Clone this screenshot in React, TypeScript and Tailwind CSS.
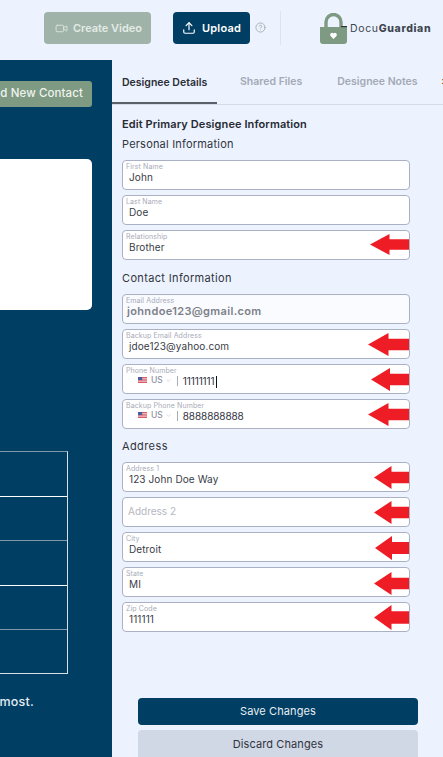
import { Video, Upload, CircleHelp, ChevronDown } from "lucide-react";

const font = { fontFamily: '"Inter", "Liberation Sans", sans-serif' };

function Arrow({ w, h, top }: { w: number; h: number; top: number }) {
  return (
    <svg
      className="absolute right-0 z-10"
      style={{ width: w, height: h, top }}
      viewBox="0 0 40 22"
      preserveAspectRatio="none"
    >
      <polygon points="0,11 20,0 20,5.5 40,5.5 40,16.5 20,16.5 20,22" fill="#ee1c25" />
    </svg>
  );
}

function Flag() {
  return (
    <svg width="9" height="6" viewBox="0 0 13 8" preserveAspectRatio="none" className="mt-[-3px] shrink-0">
      <rect width="13" height="8" fill="#f3d5d8" />
      <rect y="0" width="13" height="1.2" fill="#d9505e" />
      <rect y="2.3" width="13" height="1.2" fill="#d9505e" />
      <rect y="4.6" width="13" height="1.2" fill="#d9505e" />
      <rect y="6.8" width="13" height="1.2" fill="#d9505e" />
      <rect width="6" height="4.2" fill="#4a5c9a" />
    </svg>
  );
}

function Field({
  label,
  value,
  arrow,
  muted,
  strong,
  phone,
  cursor,
}: {
  label: string;
  value?: string;
  arrow?: [number, number, number];
  muted?: boolean;
  strong?: boolean;
  phone?: boolean;
  cursor?: boolean;
}) {
  return (
    <div
      className={`relative h-[30px] w-[288px] rounded-[4px] border border-[#abb1c4] pl-[3px] ${
        muted ? "bg-[#f9fbff]" : "bg-white"
      }`}
    >
      {value !== undefined ? (
        <>
          <div className="h-[9px] pt-[1px] text-[7px] leading-[9px] tracking-[0.1px] text-[#a8abb8]">{label}</div>
          {phone ? (
            <div className="flex h-[15px] items-center pl-[12px]">
              <Flag />
              <span className="ml-[4px] mt-[-3px] text-[8.5px] text-[#7d8291]">US</span>
              <ChevronDown className="ml-[2px] mt-[-3px] h-[7px] w-[7px] text-[#c4c7d0]" />
              <span className="ml-[5px] mt-[-1px] h-[10px] w-px bg-[#a9adb9]" />
              <span className="ml-[5px] text-[10px] tracking-[-0.1px] text-[#2f3340]">{value}</span>
              {cursor && <span className="ml-[1px] h-[12px] w-px bg-[#111]" />}
            </div>
          ) : (
            <div
              className={`leading-[14px] ${
                strong
                  ? "pl-[1px] text-[11px] font-semibold tracking-[0.35px] text-[#7d7f88]"
                  : "pl-[3px] text-[10px] tracking-[0.1px] text-[#3a3d47]"
              }`}
            >
              {value}
            </div>
          )}
        </>
      ) : (
        <div className="pl-[2px] pt-[7px] text-[10px] leading-[12px] text-[#b5b7bf]">{label}</div>
      )}
      {arrow && <Arrow w={arrow[0]} h={arrow[1]} top={arrow[2]} />}
    </div>
  );
}

export default function App() {
  return (
    <div className="flex h-[757px] w-[443px] flex-col overflow-hidden bg-[#edf3fe]" style={font}>
      <header className="flex h-[60px] shrink-0 items-start pl-[44px] pt-[12px]">
        <div className="flex h-[32px] w-[107px] items-center justify-center gap-[5px] rounded-[4px] bg-[#9fb3a8] pl-[2px] text-[11px] font-semibold text-[#e3ebe6]">
          <Video className="h-[13px] w-[13px]" strokeWidth={1.5} />
          Create Video
        </div>
        <div className="ml-[22px] flex h-[32px] w-[77px] items-center justify-center gap-[6px] rounded-[4px] bg-[#003e63] text-[11px] font-semibold tracking-[0.2px] text-white">
          <Upload className="h-[14px] w-[14px]" strokeWidth={2} />
          Upload
        </div>
        <CircleHelp className="ml-[5px] mt-[10px] h-[11px] w-[11px] text-[#8f9c97]" strokeWidth={1.5} />
        <div className="ml-[14px] mt-[-1px] h-[34px] w-px bg-[#dfe3ea]" />
        <svg width="27" height="31" viewBox="0 0 27 31" className="ml-[39px] mt-[1px] shrink-0">
          <path d="M6 14V9a7.5 7.5 0 0 1 15 0v5" fill="none" stroke="#7f9a83" strokeWidth="3.4" />
          <path d="M0 14h27v14a3 3 0 0 1-3 3H3a3 3 0 0 1-3-3z" fill="#7f9a83" />
          <path d="M13.5 26l-3-3a2 2 0 0 1 3-2.6 2 2 0 0 1 3 2.6z" fill="#fff" />
          <rect x="21" y="13" width="6" height="1.2" fill="#333" />
        </svg>
        <div className="ml-[3px] mt-[10px] text-[10.5px] leading-[14px] tracking-[0.65px] text-[#3e4651]">
          Docu<span className="font-extrabold">Guardian</span>
        </div>
      </header>

      <div className="flex min-h-0 flex-1">
        <aside className="flex w-[112px] shrink-0 flex-col items-end overflow-hidden bg-[#003e63] pr-[20px] pt-[21px]">
          <div className="flex h-[26px] w-[140px] shrink-0 items-center justify-end whitespace-nowrap rounded-[3px] bg-[#7f9a83] pr-[9px] text-[11.5px] font-medium tracking-[0.1px] text-[#eef3ee]">
            Add New Contact
          </div>
          <div className="mt-[52px] h-[151px] w-[140px] shrink-0 rounded-[5px] bg-white" />
          <div className="mr-[24px] mt-[141px] w-[90px] shrink-0 border border-[#d7e0e6] border-t-[#7d99ab]">
            <div className="h-[44.6px] border-b border-white" />
            <div className="h-[44.6px] border-b border-[#7d99ab]" />
            <div className="h-[44.6px] border-b border-white" />
            <div className="h-[44.6px] border-b border-[#7d99ab]" />
            <div className="h-[43px]" />
          </div>
          <div className="mr-[58px] mt-[19px] w-[140px] shrink-0 text-right text-[12.5px] font-medium tracking-[0.2px] text-[#e6edf2]">
            most.
          </div>
        </aside>

        <main className="relative flex min-w-0 flex-1 flex-col">
          <nav className="flex h-[45px] shrink-0 items-center overflow-hidden border-b border-[#d6dae2] pt-[2px] text-[10.5px] font-semibold whitespace-nowrap">
            <div className="relative flex h-[42px] w-[105px] shrink-0 items-center pl-[10px] text-[#2a2e38]">
              Designee Details
              <div className="absolute bottom-0 left-0 h-[2px] w-full bg-[#5c6068]" />
            </div>
            <div className="ml-[23px] mb-[2px] text-[#a4a9b6]">Shared Files</div>
            <div className="ml-[35px] mb-[2px] text-[#a4a9b6]">Designee Notes</div>
            <div className="ml-[24px] mb-[2px] font-bold text-[#222]">›</div>
          </nav>

          <div className="flex flex-col pl-[10px]">
            <h2 className="mt-[12px] text-[11px] font-semibold leading-[14px] tracking-[0.1px] text-[#262a34]">
              Edit Primary Designee Information
            </h2>
            <h3 className="mt-[6px] text-[11px] leading-[14px] tracking-[0.2px] text-[#30343e]">Personal Information</h3>
            <div className="mt-[9px] flex flex-col gap-[5px]">
              <Field label="First Name" value="John" />
              <Field label="Last Name" value="Doe" />
              <Field label="Relationship" value="Brother" arrow={[39, 21, 3]} />
            </div>
            <h3 className="mt-[11px] text-[11px] leading-[14px] tracking-[0.35px] text-[#30343e]">Contact Information</h3>
            <div className="mt-[9px] flex flex-col gap-[5px]">
              <Field label="Email Address" value="johndoe123@gmail.com" muted strong />
              <Field label="Backup Email Address" value="jdoe123@yahoo.com" arrow={[41, 23, 3]} />
              <Field label="Phone Number" value="11111111" phone cursor arrow={[38, 23, 3]} />
              <Field label="Backup Phone Number" value="8888888888" phone arrow={[41, 23, 3]} />
            </div>
            <h3 className="mt-[10px] text-[11px] leading-[14px] tracking-[0.4px] text-[#30343e]">Address</h3>
            <div className="mt-[9px] flex flex-col gap-[5px]">
              <Field label="Address 1" value="123 John Doe Way" arrow={[35, 23, 3]} />
              <Field label="Address 2" arrow={[35, 23, 3]} />
              <Field label="City" value="Detroit" arrow={[34, 24, 3]} />
              <Field label="State" value="MI" arrow={[35, 23, 4]} />
              <Field label="Zip Code" value="111111" arrow={[35, 25, 2]} />
            </div>
          </div>

          <div className="mt-auto flex flex-col gap-[5px] pl-[26px] text-[11px]">
            <button className="h-[27px] w-[280px] rounded-[4px] bg-[#003e63] tracking-[0.1px] text-[#e8eef2]">
              Save Changes
            </button>
            <button className="h-[27px] w-[280px] rounded-t-[4px] bg-[#d0d8e5] pt-[1px] tracking-[0.1px] text-[#30343e]">
              Discard Changes
            </button>
          </div>
        </main>
      </div>
    </div>
  );
}
